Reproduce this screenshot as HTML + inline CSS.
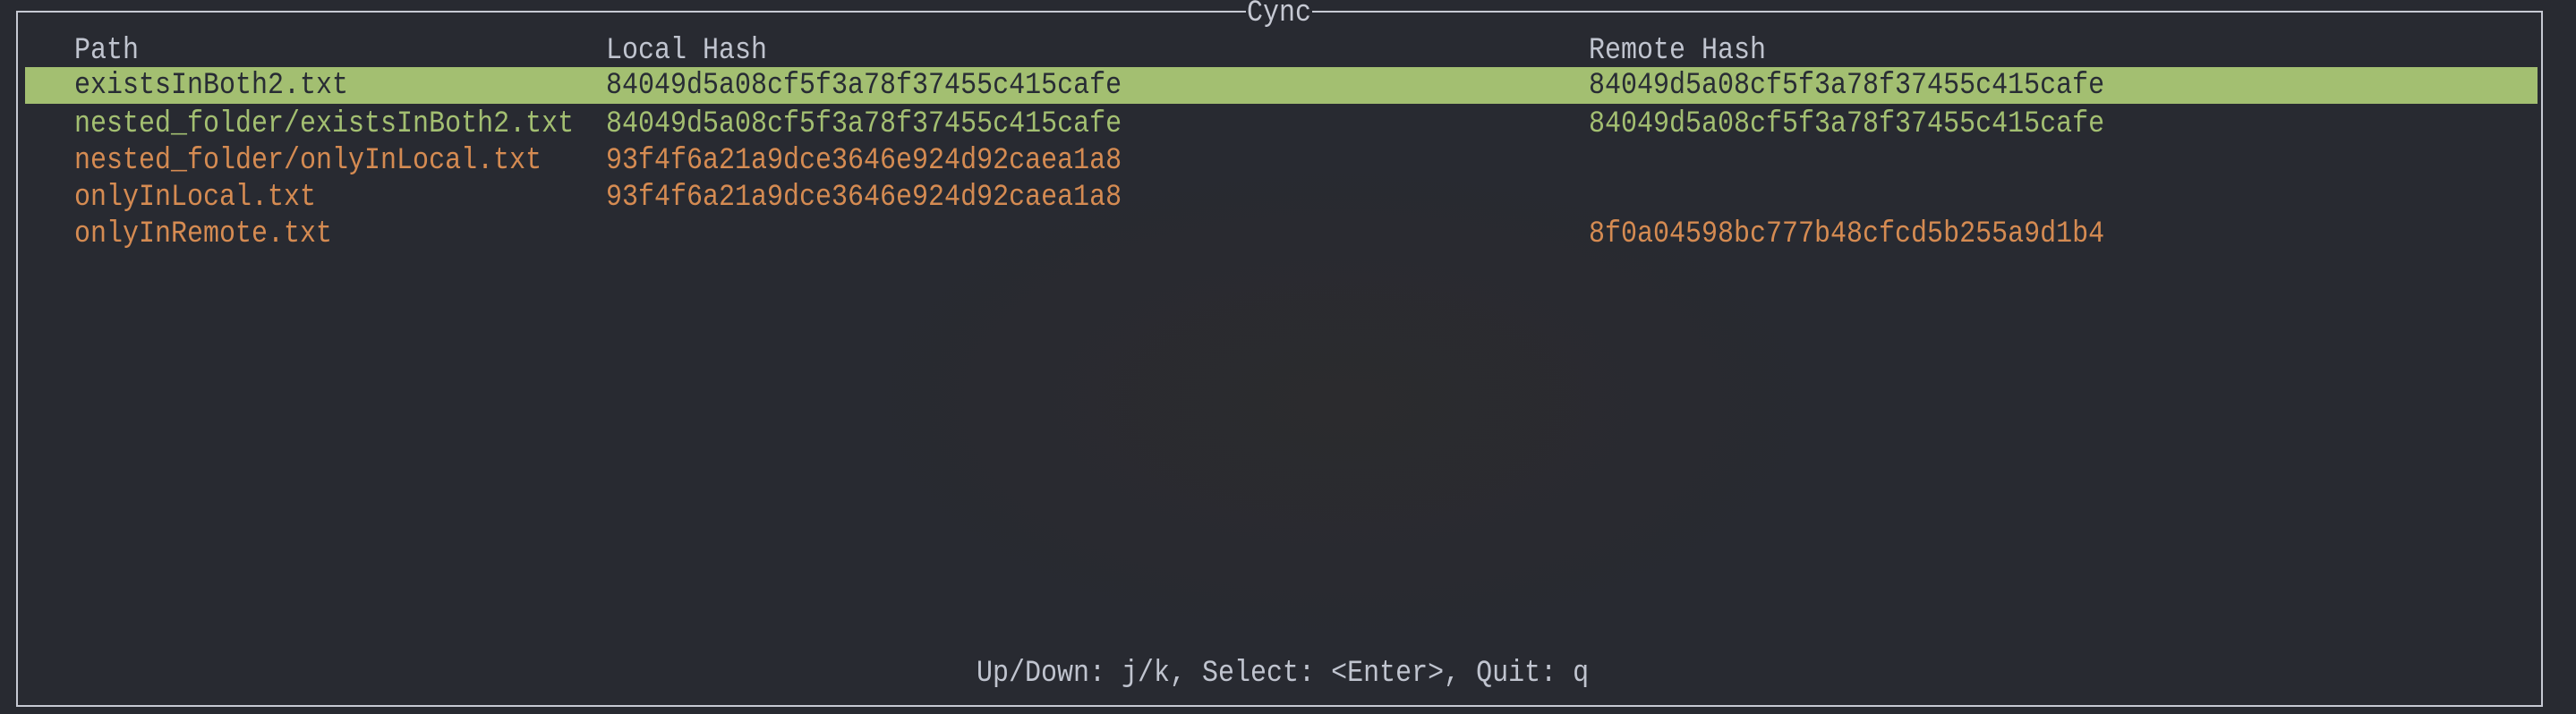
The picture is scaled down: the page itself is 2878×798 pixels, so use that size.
<!DOCTYPE html>
<html><head><meta charset="utf-8"><style>
html,body{margin:0;padding:0}
body{width:2878px;height:798px;background:#282a31;position:relative;overflow:hidden;font-family:"Liberation Mono","DejaVu Sans Mono",monospace;font-size:30px;}
.bg{position:absolute;inset:0;background:radial-gradient(ellipse 800px 400px at 1500px 450px,#2b2b2e 0%,#282a31 70%),#282a31;}
.box{position:absolute;left:18px;top:12px;width:2823px;height:778px;border:2px solid #c6c9d3;box-sizing:border-box;}
.t{position:absolute;white-space:pre;line-height:40px;height:40px;transform:scaleY(1.15);transform-origin:center;}
.title{position:absolute;left:1392px;top:0px;background:#282a31;color:#c6c9d3;padding:0 1px;line-height:30px;height:30px;white-space:pre;transform:scaleY(1.15);}
.hl{position:absolute;left:28px;top:75px;width:2807px;height:41px;background:#a3bf71;}
.h{color:#c0c4cf}.g{color:#a3bf71}.o{color:#d58b52}.s{color:#282c34}
</style></head><body>
<div class="bg"></div>
<div class="box"></div>
<div class="title">Cync</div>
<div class="hl"></div>
<div class="t h" style="left:83px;top:37px">Path</div>
<div class="t h" style="left:677px;top:37px">Local Hash</div>
<div class="t h" style="left:1775px;top:37px">Remote Hash</div>

<div class="t s" style="left:83px;top:76px">existsInBoth2.txt</div>
<div class="t s" style="left:677px;top:76px">84049d5a08cf5f3a78f37455c415cafe</div>
<div class="t s" style="left:1775px;top:76px">84049d5a08cf5f3a78f37455c415cafe</div>

<div class="t g" style="left:83px;top:119px">nested_folder/existsInBoth2.txt</div>
<div class="t g" style="left:677px;top:119px">84049d5a08cf5f3a78f37455c415cafe</div>
<div class="t g" style="left:1775px;top:119px">84049d5a08cf5f3a78f37455c415cafe</div>

<div class="t o" style="left:83px;top:160px">nested_folder/onlyInLocal.txt</div>
<div class="t o" style="left:677px;top:160px">93f4f6a21a9dce3646e924d92caea1a8</div>

<div class="t o" style="left:83px;top:201px">onlyInLocal.txt</div>
<div class="t o" style="left:677px;top:201px">93f4f6a21a9dce3646e924d92caea1a8</div>

<div class="t o" style="left:83px;top:242px">onlyInRemote.txt</div>
<div class="t o" style="left:1775px;top:242px">8f0a04598bc777b48cfcd5b255a9d1b4</div>

<div class="t h" style="left:1091px;top:733px">Up/Down: j/k, Select: &lt;Enter&gt;, Quit: q</div>
</body></html>
